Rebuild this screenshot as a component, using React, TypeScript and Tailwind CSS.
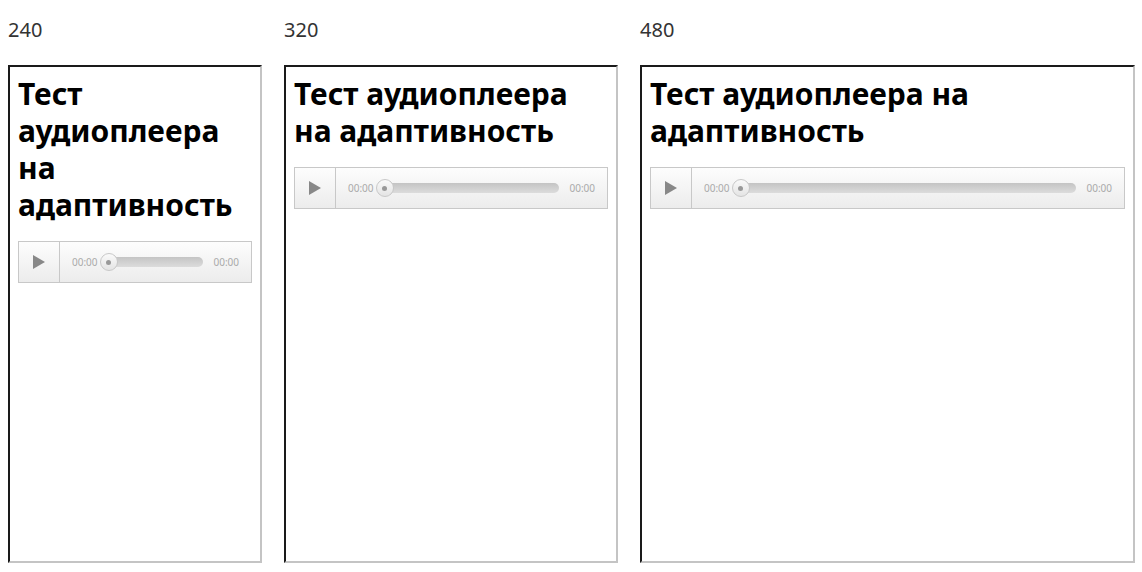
const frames = [
  { label: "240", w: "w-[254px]" },
  { label: "320", w: "w-[334px]" },
  { label: "480", w: "w-[495px]" },
];

function Player() {
  return (
    <div className="flex h-[42px] items-center border border-[#c8c8c8] bg-gradient-to-b from-[#fdfdfd] to-[#ececec] font-['Liberation_Sans',sans-serif]">
      <div className="flex h-full w-[41px] shrink-0 items-center justify-center border-r border-[#c8c8c8]">
        <svg width="14" height="16" viewBox="0 0 14 16"><path d="M1 1 L13 8 L1 15 Z" fill="#888" /></svg>
      </div>
      <span className="ml-[12px] text-[10px] text-[#aaa]">00:00</span>
      <div className="relative mx-[10px] flex h-[10px] flex-1 items-center rounded-full bg-gradient-to-b from-[#c4c4c4] to-[#dcdcdc]">
        <div className="absolute -left-[8px] flex h-[18px] w-[18px] items-center justify-center rounded-full border border-[#c8c8c8] bg-gradient-to-b from-[#fafafa] to-[#e4e4e4]">
          <div className="h-[5px] w-[5px] rounded-full bg-[#999]" />
        </div>
      </div>
      <span className="mr-[12px] text-[10px] text-[#aaa]">00:00</span>
    </div>
  );
}

export default function App() {
  return (
    <div className="flex h-[572px] gap-[22px] bg-white pl-[8px] pt-[18px]">
      {frames.map((f) => (
        <div key={f.label} className="flex flex-col">
          <div className="h-[47px] font-['Liberation_Sans',sans-serif] text-[20px] leading-[24px] text-[#333]">{f.label}</div>
          <div className={`${f.w} h-[498px] border-2 border-t-[#1a1a1a] border-l-[#1a1a1a] border-b-[#c4c4c4] border-r-[#c4c4c4] px-[8px] pt-[8px]`}>
            <h1 className="mb-[18px] font-['Liberation_Serif',serif] text-[30px] font-bold leading-[37px] text-black">Тест аудиоплеера на адаптивность</h1>
            <Player />
          </div>
        </div>
      ))}
    </div>
  );
}
